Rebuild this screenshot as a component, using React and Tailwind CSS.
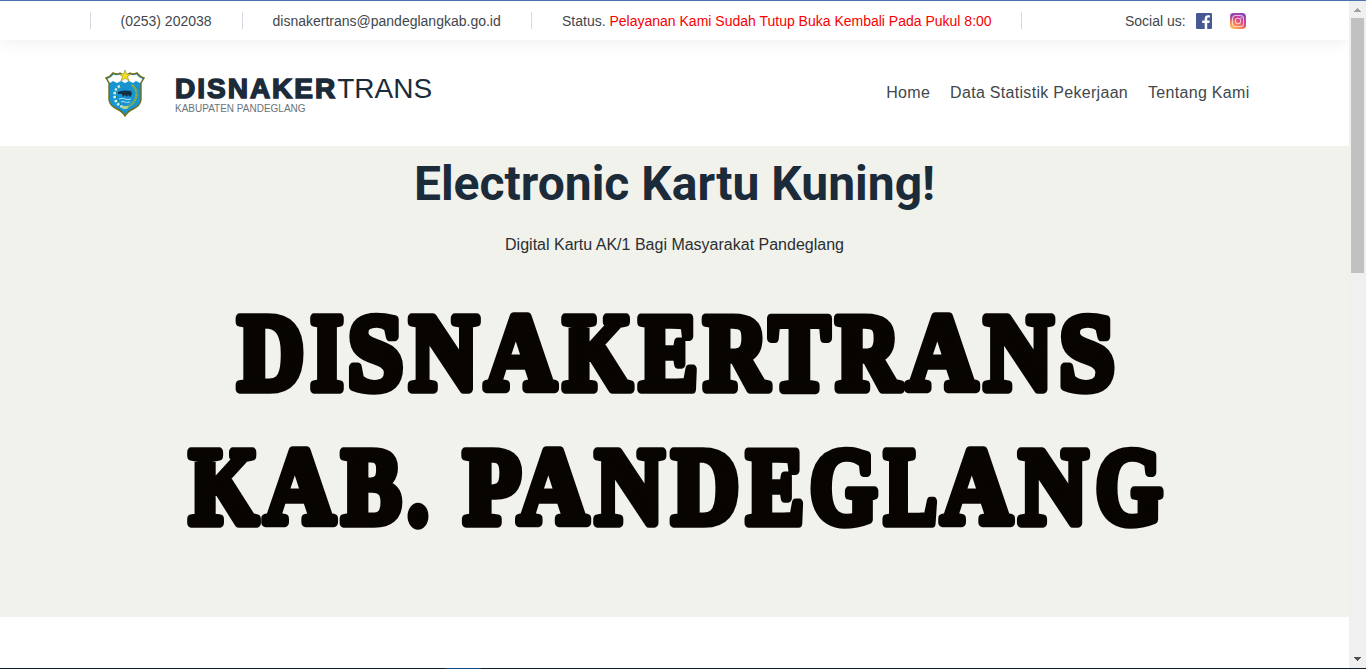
import React from "react";

const STROKE = 9.5;

// Each entry: character, left edge and width of the drawn letter
const LINE_ONE = [
  ["D", 234.5, 73], ["I", 307.5, 39], ["S", 344.5, 62], ["N", 406.5, 75], ["A", 482, 77],
  ["K", 560, 75], ["E", 636, 65], ["R", 700.5, 71], ["T", 766, 67], ["R", 832.7, 71],
  ["A", 903.7, 76.5], ["N", 981, 75], ["S", 1056, 62],
];
const LINE_TWO = [
  ["K", 186, 75.3], ["A", 261, 77], ["B", 338.5, 66], [".", 407.5, 21], ["P", 460.2, 64],
  ["A", 514.7, 76.5], ["N", 592, 75], ["D", 668.5, 74], ["E", 743.2, 64], ["G", 806.5, 74],
  ["L", 881, 59.5], ["A", 938, 77], ["N", 1015.7, 75], ["G", 1092.2, 73.5],
];

function BannerLine({ letters, y }) {
  return (
    <text y={y} fontSize="109" fontWeight="700" fontFamily="Liberation Serif, serif" fill="#080500" stroke="#080500" strokeWidth={STROKE} strokeLinejoin="round">
      {letters.map(([c, x, w], i) => (
        <tspan
          key={i}
          x={c === "." ? x : x + 3.5}
          textLength={c === "." ? w : w - 7}
          lengthAdjust="spacingAndGlyphs"
        >
          {c}
        </tspan>
      ))}
    </text>
  );
}

function Crest() {
  return (
    <svg width="40" height="47" viewBox="0 0 40 47" className="shrink-0">
      <path d="M1 8 Q5 7 8 3 Q12 5 15 3 L20 6 L25 3 Q28 5 32 3 Q35 7 39 8 L36 13 V30 Q35 36 28 39 Q23 41 20 46 Q17 41 12 39 Q5 36 4 30 V13 Z" fill="#1794d2" stroke="#716c16" strokeWidth="1.4" />
      <path d="M2.5 9 Q6 8 8.5 4.5 Q12 6 15 4.5 L20 8 L25 4.5 Q28 6 31.5 4.5 Q34 8 37.5 9 L35 13 L31 11 L28 13 L24 11 L20 13 L16 11 L12 13 L8 11 L5 13 Z" fill="#fff" />
      <path d="M20 0 L21.5 4 H26 L22.5 6.5 L24 11 L20 8.3 L16 11 L17.5 6.5 L14 4 H18.5 Z" fill="#f3df22" stroke="#81751b" strokeWidth=".5" />
      <path d="M15 16 Q8 20 10 29 Q12 35 18 37" fill="none" stroke="#d5f1e4" strokeWidth="2.6" strokeDasharray="2.4 1.6" />
      <path d="M16 16 Q10 20 12 28 Q14 34 19 36" fill="none" stroke="#17804f" strokeWidth="1" strokeDasharray="1.6 2.4" />
      <path d="M27 15 Q34 21 30 30 Q27 35 22 37" fill="none" stroke="#9cac35" strokeWidth="2.4" strokeDasharray="2 .6" />
      <path d="M13 22 L16 21 Q20 20 26 21 L27 24 L25 27 L23 25 L22 27 L20 25 L18 27 L17 24 L13 24 Z" fill="#143247" />
      <path d="M14 29 Q17 27.5 20 29 T26 29 M16 32 Q18 30.8 20 32 T25 32" fill="none" stroke="#a7def3" strokeWidth="1" />
      <path d="M16 36 H24 L22 39 H18 Z" fill="#b8d48a" />
    </svg>
  );
}

function FacebookIcon() {
  return (
    <svg width="16" height="16" viewBox="0 0 16 16">
      <rect width="16" height="16" rx="1.2" fill="#475993" />
      <path d="M8.7 16 V10 H6.2 V7.5 H8.7 V5.8 C8.7 3.3 10.1 2.2 12.1 2.2 L13.9 2.3 V4.5 H12.6 C11.5 4.5 11.2 5 11.2 5.9 V7.5 H13.8 L13.4 10 H11.2 V16 Z" fill="#fff" />
    </svg>
  );
}

function InstagramIcon() {
  return (
    <svg width="16" height="16" viewBox="0 0 16 16">
      <defs>
        <linearGradient id="ig" x1="0.15" y1="1" x2="0.75" y2="0">
          <stop offset="0" stopColor="#ffc86a" />
          <stop offset=".3" stopColor="#fa8053" />
          <stop offset=".6" stopColor="#dc4289" />
          <stop offset="1" stopColor="#8145c7" />
        </linearGradient>
        <radialGradient id="igBlue" cx="0" cy="0" r=".55">
          <stop offset="0" stopColor="#4c55cf" />
          <stop offset="1" stopColor="#9b45bb" stopOpacity="0" />
        </radialGradient>
      </defs>
      <rect width="16" height="16" rx="3.8" fill="url(#ig)" />
      <rect width="16" height="16" rx="3.8" fill="url(#igBlue)" />
      <rect x="2.5" y="2.5" width="11" height="11" rx="3.2" fill="none" stroke="#fff" strokeOpacity=".65" strokeWidth="1.1" />
      <circle cx="8" cy="8" r="2.7" fill="none" stroke="#fff" strokeOpacity=".65" strokeWidth="1.1" />
      <circle cx="11.2" cy="4.8" r=".7" fill="#fff" fillOpacity=".8" />
    </svg>
  );
}

function Divider() {
  return <span className="h-[17px] w-px shrink-0 bg-[#d5dae3]" />;
}

function TopBar() {
  return (
    <div className="flex h-[39px] shrink-0 items-center bg-white pl-[90px] text-[14px] leading-5 whitespace-nowrap text-[#42474c] shadow-[0_0_20px_rgba(0,0,0,0.08)]">
      <Divider />
      <span className="w-[151px] pl-[29.5px]">(0253) 202038</span>
      <Divider />
      <span className="w-[288px] pl-[29.5px]">disnakertrans@pandeglangkab.go.id</span>
      <Divider />
      <span className="w-[489px] pl-[30px]">
        Status. <span className="text-[#f80000]">Pelayanan Kami Sudah Tutup Buka Kembali Pada Pukul 8:00</span>
      </span>
      <Divider />
      <span className="w-[174px] pl-[103px]">Social us:</span>
      <div className="flex gap-[18px]">
        <FacebookIcon />
        <InstagramIcon />
      </div>
    </div>
  );
}

function Header() {
  return (
    <header className="flex h-[106px] shrink-0 items-start pr-[99.5px] pl-[105px]">
      <div className="flex items-start gap-[30px] pt-[30px]">
        <Crest />
        <div className="whitespace-nowrap text-[#1c2b39]">
          <div className="flex h-[33px] items-center pt-[4px] text-[28px] leading-8">
            <span className="font-bold tracking-[2px] [-webkit-text-stroke:1.5px_#1c2b39]">DISNAKER</span>
            <span>TRANS</span>
          </div>
          <div className="text-[10px] leading-3 text-[#6b737a]">KABUPATEN PANDEGLANG</div>
        </div>
      </div>
      <nav className="ml-auto flex gap-5 pt-[41px] text-[16px] leading-6 tracking-[0.3px] whitespace-nowrap text-[#42474c]">
        <a>Home</a>
        <a>Data Statistik Pekerjaan</a>
        <a>Tentang Kami</a>
      </nav>
    </header>
  );
}

function Scrollbar() {
  return (
    <div className="flex w-[17px] flex-col items-center bg-[#f0f0f0]">
      <svg width="17" height="17" viewBox="0 0 17 17" shapeRendering="crispEdges">
        <path d="M5 11 L8.5 7 L12 11 Z" fill="#a0a0a0" />
      </svg>
      <div className="h-[255px] w-[13px] bg-[#c1c1c1]" />
      <svg width="17" height="17" viewBox="0 0 17 17" className="mt-auto" shapeRendering="crispEdges">
        <path d="M5 6 L8.5 10 L12 6 Z" fill="#505050" />
      </svg>
    </div>
  );
}

export default function App() {
  return (
    <div className="flex h-[669px] w-[1366px] flex-col overflow-hidden bg-white font-['Liberation_Sans',sans-serif]">
      <div className="h-px shrink-0 bg-[#4a74b0]" />
      <div className="flex min-h-0 flex-1">
        <main className="flex w-[1349px] flex-col overflow-hidden">
          <TopBar />
          <Header />
          <section className="flex h-[471px] shrink-0 flex-col items-center bg-[#f1f2ec]">
            <h1 className="mt-[8px] h-[60px] font-['Roboto',sans-serif] text-[48px] leading-[60px] font-bold whitespace-nowrap text-[#1c2b39]">
              Electronic Kartu Kuning!
            </h1>
            <p className="mt-[19px] text-[16px] leading-6 text-[#2b2e31]">Digital Kartu AK/1 Bagi Masyarakat Pandeglang</p>
            <svg width="1349" height="290" viewBox="0 270 1349 290" className="mt-[13px] shrink-0">
              <BannerLine letters={LINE_ONE} y={389.2} />
              <BannerLine letters={LINE_TWO} y={523.2} />
            </svg>
          </section>
        </main>
        <Scrollbar />
      </div>
      <div className="flex h-px shrink-0 bg-[#0d1f2f]">
        <span className="ml-[445px] w-[36px] bg-[#0a4a80]" />
      </div>
    </div>
  );
}
